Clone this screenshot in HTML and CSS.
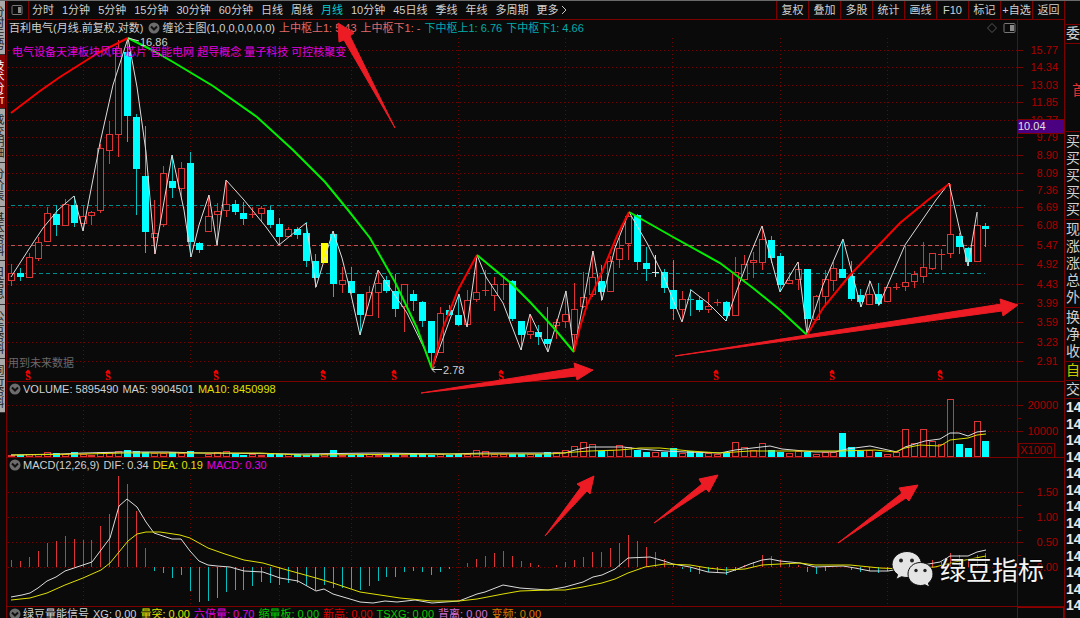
FILE: index.html
```html
<!DOCTYPE html>
<html lang="zh-CN">
<head>
<meta charset="utf-8">
<title>百利电气 月线</title>
<link rel="stylesheet" href="styles.css">
</head>
<body>
<div class="terminal">
  <nav class="side-tabs" aria-label="视图">
    <button class="tab">分时走势</button>
    <button class="tab active">技术分析</button>
    <button class="tab">成交明细</button>
    <button class="tab short">分价表</button>
    <button class="tab">基本资料</button>
    <button class="tab short">日信息</button>
    <button class="tab">公告资料</button>
    <button class="tab">同行资料</button>
  </nav>

  <main class="main">
    <header class="toolbar">
      <button class="layout-btn" aria-label="布局"><svg width="12" height="12" viewBox="0 0 12 12"><rect x="1" y="1.5" width="10" height="9" rx="1" class="ico-line"/><rect x="7" y="3" width="3" height="6" class="ico-fill"/></svg></button>
      <div class="periods">
        <button>分时</button><button>1分钟</button><button>5分钟</button><button>15分钟</button><button>30分钟</button><button>60分钟</button><button>日线</button><button>周线</button><button class="on">月线</button><button>10分钟</button><button>45日线</button><button>季线</button><button>年线</button><button>多周期</button><button class="more">更多<svg width="7" height="10" viewBox="0 0 7 10"><path d="M1 1l4 4-4 4" class="ico-line light"/></svg></button>
      </div>
      <div class="tools">
        <button>复权</button><button>叠加</button><button>多股</button><button>统计</button><button>画线</button><button>F10</button><button>标记</button><button>+自选</button><button>返回</button>
      </div>
    </header>

    <div class="charts">
      <section class="panel">
        <svg id="price" class="plot" viewBox="7 20 1057 362"></svg>
        <div class="legend">
          <span>百利电气(月线.前复权.对数)</span>
          <button class="fold" aria-label="折叠"><svg width="12" height="12" viewBox="0 0 12 12"><circle cx="6" cy="6" r="5.5"/><path d="M3 4.5l3 3 3-3"/></svg></button>
          <span>缠论主图(1,0,0,0,0,0,0)</span>
          <span class="rose">上中枢上1: 5.43</span>
          <span class="rose">上中枢下1: -</span>
          <span class="teal">下中枢上1: 6.76</span>
          <span class="teal">下中枢下1: 4.66</span>
          <span class="panel-icons"><svg width="30" height="12" viewBox="0 0 30 12"><path d="M5 1.5L9.500 6 5 10.500.5 6z" class="ico-line dim"/><rect x="17" y="1.500" width="11" height="9" rx="1" class="ico-line"/><rect x="23" y="3" width="4" height="6" class="ico-fill"/></svg></span>
        </div>
        <p class="concepts">电气设备天津板块风电 芯片 智能电网 超导概念 量子科技 可控核聚变</p>
        <p class="notice">用到未来数据</p>
      </section>

      <section class="panel">
        <svg id="volume" class="plot" viewBox="7 382 1057 76"></svg>
        <div class="legend sub">
          <button class="fold" aria-label="折叠"><svg width="12" height="12" viewBox="0 0 12 12"><circle cx="6" cy="6" r="5.5"/><path d="M3 4.5l3 3 3-3"/></svg></button>
          <span>VOLUME: 5895490</span><span>MA5: 9904501</span><span class="yellow">MA10: 8450998</span>
        </div>
      </section>

      <section class="panel">
        <svg id="macd" class="plot" viewBox="7 458 1057 149"></svg>
        <div class="legend sub">
          <button class="fold" aria-label="折叠"><svg width="12" height="12" viewBox="0 0 12 12"><circle cx="6" cy="6" r="5.5"/><path d="M3 4.5l3 3 3-3"/></svg></button>
          <span>MACD(12,26,9)</span><span>DIF: 0.34</span><span class="yellow">DEA: 0.19</span><span class="magenta">MACD: 0.30</span>
        </div>
      </section>

      <section class="panel signal">
        <div class="legend sub">
          <button class="fold" aria-label="折叠"><svg width="12" height="12" viewBox="0 0 12 12"><circle cx="6" cy="6" r="5.5"/><path d="M3 4.5l3 3 3-3"/></svg></button>
          <span>绿豆量能信号</span><span>XG: 0.00</span><span class="yellow">量突: 0.00</span><span class="magenta">六倍量: 0.70</span><span class="green">缩量板: 0.00</span><span class="red">新高: 0.00</span><span class="green">TSXG: 0.00</span><span class="violet">背离: 0.00</span><span class="orange">变频: 0.00</span>
        </div>
        <div class="signal-axis"></div>
      </section>

      <svg id="notes" class="notes" viewBox="7 20 1057 598"></svg>
    </div>
  </main>

  <aside class="quote">
    <div class="cell gap"></div>
    <div class="cell head">委</div>
    <div class="cell big">首</div>
    <div class="cell rows"><span>买</span><span>买</span><span>买</span><span>买</span><span>买</span></div>
    <div class="cell rows"><span>现</span><span>涨</span><span>涨</span><span>总</span><span>外</span></div>
    <div class="cell rows"><span>换</span><span>净</span><span>收</span></div>
    <div class="cell own">自</div>
    <div class="cell deal">交</div>
    <div class="ticks"><b>14</b><b>14</b><b>14</b><b>14</b><b>14</b><b>14</b><b>14</b><b>14</b><b>14</b><b>14</b><b>14</b><b>14</b><b>14</b></div>
  </aside>
</div>
<script src="chart.js"></script>
</body>
</html>
```

FILE: styles.css
```css
* { box-sizing: border-box; }

body {
  margin: 0;
  height: 100vh;
  overflow: hidden;
  background: #0a0a0a;
  color: #d0d0d0;
  font: 11px/16px "Liberation Sans", "Noto Sans CJK SC", sans-serif;
}

button {
  margin: 0;
  padding: 0;
  border: 0;
  background: none;
  color: inherit;
  font: inherit;
  white-space: nowrap;
}

p { margin: 0; }

.terminal {
  display: grid;
  grid-template-columns: 7px minmax(0, 1fr) 16px;
  height: 100vh;
  border-top: 1px solid #6a6a6a;
}

/* left tabs */
.side-tabs {
  display: flex;
  flex-direction: column;
  overflow: hidden;
  border-right: 1px solid #7c0000;
}
.tab {
  flex: none;
  width: 14px;
  height: 54px;
  margin-left: -9px;
  border-bottom: 1px solid #333;
  background: #a9a9a9;
  color: #202020;
  line-height: 14px;
  writing-mode: vertical-rl;
  text-orientation: upright;
}
.tab.short { height: 44px; }
.tab.active { background: #8a0000; color: #fff; }

/* toolbar */
.main { min-width: 0; overflow: hidden; }
.toolbar {
  display: flex;
  height: 19px;
  border-bottom: 1px solid #7c0000;
  line-height: 18px;
}
.layout-btn {
  display: flex;
  align-items: center;
  width: 22px;
  padding-left: 4px;
  border-right: 1px solid #7c0000;
}
.periods { display: flex; flex: 1; gap: 8px; padding-left: 3px; }
.periods .on { color: #00d0d0; }
.more { display: flex; align-items: center; gap: 2px; }
.tools { display: flex; }
.tools button { width: 32px; border-left: 1px solid #7c0000; }

.ico-line { fill: none; stroke: #777; }
.ico-line.light { stroke: #c4c4c4; }
.ico-line.dim { stroke: #555; }
.ico-fill { fill: #888; }

/* chart panels */
.charts { position: relative; }
.panel { position: relative; }
.plot { display: block; width: 100%; }
.legend {
  position: absolute;
  inset: 0 0 auto 0;
  display: flex;
  align-items: center;
  gap: 4px;
  padding-left: 2px;
  white-space: nowrap;
}
.legend.sub { padding-left: 2px; line-height: 14px; }
.fold { display: flex; margin: 0 -2px 0 0; }
.fold:not(:first-child) { margin-left: 1px; }
.fold circle { fill: #6c6c6c; }
.fold path { fill: none; stroke: #111; stroke-width: 2; }
.panel-icons { display: flex; margin: 0 47px 0 auto; }
.concepts {
  position: absolute;
  top: 24px;
  left: 5px;
  color: #e000e0;
}
.notice {
  position: absolute;
  bottom: 11px;
  left: 1px;
  color: #686868;
}
.rose { color: #e06a6a; }
.teal { color: #00acac; }
.yellow { color: #e0e000; }
.magenta { color: #e000e0; }
.green { color: #00cc00; }
.red { color: #dc0000; }
.violet { color: #d46ed4; }
.orange { color: #dc7800; }

.signal { height: 20px; display: flex; justify-content: flex-end; }
.signal-axis { width: 47px; border: 1px solid #8c0000; }

.notes {
  position: absolute;
  top: 0;
  left: 0;
  width: 100%;
  pointer-events: none;
}

/* chart marks */
.rule { stroke: #7c0000; }
.grid { stroke: #740000; stroke-dasharray: 1 3; }
.level { stroke-dasharray: 4 3; }
.level.rose-line { stroke: #b85858; }
.level.teal-line { stroke: #008c8c; }
.axis-text { fill: #ac0000; font-size: 11px; text-anchor: end; }
.up { fill: #0a0a0a; stroke: #dc3434; }
.up-line { stroke: #dc3434; }
.down { fill: #00ffff; }
.down-line { stroke: #00c0c0; }
.flat-line { stroke: #dddddd; }
.mark { fill: #ffff00; }
.zig { fill: none; stroke: #dcdcdc; stroke-linejoin: round; }
.avg { fill: none; stroke: #e0e000; }
.rise { fill: none; stroke: #f80000; stroke-width: 2; }
.fall { fill: none; stroke: #00f000; stroke-width: 2; }
.arrow { fill: #ed1c24; stroke: #ed1c24; stroke-linejoin: round; }
.sell { fill: #ff0000; font: bold 10px "Liberation Serif", serif; text-anchor: middle; }
.sell-cap { fill: none; stroke: #ff0000; stroke-width: 2; }
.note-text { fill: #d0d0d0; font-size: 11px; }
.tag-box { fill: #4b0082; stroke: #7c0000; }
.tag-text { fill: #e0e0e0; font-size: 11px; }
.unit-box { fill: none; stroke: #7c0000; }
.bubble { fill: #e4e4e4; stroke: #0a0a0a; }
.bubble-eye { fill: #222; }
.brand {
  fill: #f4f4f4;
  font: 26px "Noto Sans CJK SC", sans-serif;
  paint-order: stroke;
  stroke: #00000080;
  stroke-width: 2;
}

/* right quote strip */
.quote {
  display: flex;
  flex-direction: column;
  overflow: hidden;
  border-left: 1px solid #7c0000;
  padding-left: 1px;
  font-size: 14px;
  line-height: 17px;
}
.cell { flex: none; border-bottom: 1px solid #7c0000; overflow: hidden; white-space: nowrap; }
.gap { height: 24px; }
.head { height: 19px; }
.big { height: 88px; padding: 38px 0 0 6px; color: #e83030; }
.rows { display: flex; flex-direction: column; padding: 1px 0; }
.own { height: 19px; color: #c8c800; }
.deal { height: 18px; }
.ticks {
  display: flex;
  flex: 1;
  flex-direction: column;
  justify-content: space-between;
  padding-bottom: 5px;
  line-height: 16px;
  color: #e8e8e8;
}
```

FILE: chart.js
```js
const NS = "http://www.w3.org/2000/svg";
const step = 8.94, start = 11.5;
const xAt = i => Math.round(start + i * step - 0.5) + 0.5;

function add(svg, tag, attrs, text) {
  const el = document.createElementNS(NS, tag);
  for (const k in attrs) el.setAttribute(k, attrs[k]);
  if (text) el.textContent = text;
  svg.appendChild(el);
  return el;
}
const line = (svg, x1, y1, x2, y2, cls) => add(svg, "line", { x1, y1, x2, y2, class: cls });
const poly = (svg, points, cls) => add(svg, "polyline", { points, class: cls });

// Each row: kind, high, body top, body bottom, low
const candles = `r 264 273 281 286,c 268 273 277 281,r 253 257 278 278,r 237 242 259 261,r 207 213 242 242,c 205 214 225 236,r 199 204 226 226,c 196 205 223 227,r 206 216 224 231,r 211 212 216 225,r 144 148 211 213,r 121 134 151 164,r 40 48 135 157,c 40 52 116 142,c 114 117 169 215,c 126 176 232 253,r 200 233 238 254,r 166 173 225 227,c 155 181 188 198,r 162 168 189 200,c 152 163 242 257,c 242 243 250 253,r 195 216 232 232,r 203 211 215 245,r 180 204 211 217,c 200 204 212 215,c 202 213 219 225,x 207 214 215 218,r 206 208 214 221,c 206 210 225 228,c 218 224 237 245,r 227 229 237 237,c 227 229 235 239,c 222 233 261 267,c 254 261 278 288,y 243 243 263 263,c 231 234 284 297,r 267 280 285 293,c 267 281 293 294,c 294 294 315 335,r 286 292 316 316,r 270 283 293 318,c 276 280 291 293,c 274 291 309 317,r 284 284 307 332,c 290 294 301 311,c 301 302 321 327,c 321 321 353 369,r 307 313 353 353,c 305 310 315 316,c 294 315 325 326,r 290 300 325 327,r 256 292 300 302,x 270 290 291 296,r 277 284 296 311,x 277 284 285 300,c 280 281 319 321,c 321 321 335 350,r 315 331 335 339,c 325 332 337 345,c 307 339 344 352,r 319 322 326 339,r 291 314 322 328,r 283 309 335 352,r 272 297 307 308,r 251 277 295 297,c 265 281 292 301,r 256 261 292 292,r 238 248 260 268,r 212 216 244 260,c 214 215 262 270,c 247 263 269 281,w 255 272 273 277,c 269 272 288 293,c 260 290 309 320,r 291 299 310 321,d 289 299 300 316,c 297 300 310 312,r 292 306 310 313,x 299 302 303 306,c 301 302 316 321,r 257 272 316 316,r 255 264 280 282,r 252 260 263 278,r 226 239 263 270,c 236 240 258 263,c 253 256 285 292,r 272 280 284 284,r 262 269 280 290,c 269 269 319 334,r 295 296 320 321,r 270 279 297 306,r 262 268 281 291,c 240 269 278 278,c 261 276 299 301,c 289 295 302 307,r 280 294 305 305,c 283 294 304 306,r 287 287 302 302,x 283 287 288 290,r 246 282 287 291,r 271 274 282 288,r 242 267 277 283,r 253 253 269 270,x 249 254 255 270,r 184 234 254 258,c 233 236 247 254,c 247 248 262 266,r 212 225 262 262,c 223 226 229 247`
  .split(",").map(s => { const p = s.split(" "); return [p[0], ...p.slice(1).map(Number)]; });

const volumes = [2,2,3,3,5,4,3,5,3,2,5,5,6,7,6,5,4,4,5,4,6,0,3,5,6,3,2,3,2,3,3,3,3,2,3,3,7,2,2,3,3,2,3,3,2,3,3,2,3,2,3,3,7,6,3,3,3,3,3,3,5,5,7,11,15,13,6,7,12,10,7,5,5,5,9,4,6,4,4,3,5,15,10,7,14,7,5,4,6,5,3,5,5,24,10,6,7,5,3,5,28,14,28,16,13,58,13,9,36,16];

const bars = [560,561,557,551,543,541,536,539,540,540,526,514,476,484,511,548,571,573,578,575,591,602,601,598,592,590,590,586,582,583,585,583,583,586,590,585,588,588,589,590,586,581,577,577,572,571,572,575,572,569,0,563,559,556,553,551,556,561,563,565,0,565,562,560,557,552,552,548,543,535,541,547,552,559,565,569,572,574,572,573,575,571,565,562,555,556,560,563,565,572,574,571,0,0,570,572,571,573,571,0,565,565,563,560,562,553,555,559,555,553];

const columns = [83.5, 190.5, 279.5, 351.5, 458.5, 565.5, 672.5, 780.5, 887.5];

function frame(svg, top, bottom, rows) {
  columns.forEach(x => line(svg, x, top, x, bottom, "grid"));
  rows.forEach(([y, label]) => {
    line(svg, 8, y + 0.5, 1017, y + 0.5, "grid");
    line(svg, 1018, y + 0.5, 1023, y + 0.5, "rule");
    add(svg, "text", { x: 1058, y: y + 4, class: "axis-text" }, label);
  });
}

// Price panel
const price = document.getElementById("price");
frame(price, 38, 370, [[50, "15.77"], [67, "14.34"], [85, "13.03"], [102, "11.85"], [120, "10.77"], [137, "9.79"], [155, "8.90"], [173, "8.09"], [190, "7.36"], [207, "6.69"], [225, "6.08"], [245, "5.47"], [264, "4.92"], [284, "4.43"], [303, "3.99"], [322, "3.59"], [342, "3.23"], [361, "2.91"]]);
line(price, 1017.5, 20, 1017.5, 382, "rule");
line(price, 7, 381.5, 1064, 381.5, "rule");
line(price, 11, 205.5, 985, 205.5, "level teal-line");
line(price, 11, 245.5, 985, 245.5, "level rose-line");
line(price, 11, 273.5, 985, 273.5, "level teal-line");
add(price, "rect", { x: 1017.5, y: 119.5, width: 46, height: 14, class: "tag-box" });
add(price, "text", { x: 1018, y: 130, class: "tag-text" }, "10.04");

candles.forEach(([kind, high, top, bottom, low], i) => {
  const x = xAt(i);
  if (kind === "r") {
    line(price, x, high, x, low, "up-line");
    add(price, "rect", { x: x - 3, y: top + 0.5, width: 6, height: Math.max(bottom - top - 1, 1), class: "up" });
  } else if (kind === "c") {
    line(price, x, high, x, low, "down-line");
    add(price, "rect", { x: x - 3.5, y: top, width: 7, height: bottom - top, class: "down" });
  } else if (kind === "y") {
    add(price, "rect", { x: x - 3.5, y: top, width: 7, height: bottom - top, class: "mark" });
  } else {
    const cls = { x: "up-line", w: "flat-line", d: "down-line" }[kind];
    line(price, x, high, x, low, cls);
    line(price, x - 3.5, top + 0.5, x + 3.5, top + 0.5, cls);
  }
});

poly(price, "11,277 29,249 43,228 58,210 74,196 83,231 87,210 100,143 113,85 128,38 137,87 146,152 151,210 155,254 172,155 184,210 191,257 199,225 209,195 217,245 226,180 244,200 266,227 279,245 306,223 316,287 333,231 342,258 350,290 360,335 378,270 390,288 407,313 425,350 432,369 459,294 467,327 477,255 486,277 503,303 521,350 530,314 548,352 566,291 574,352 593,251 602,300 615,248 629,212 647,243 663,275 682,322 691,290 708,303 726,321 737,290 750,255 762,226 780,292 798,262 807,334 823,285 843,239 861,307 870,281 879,305 905,245 936,200 949,183 968,266 977,212", "zig");
poly(price, "11,113 40,91 60,77 98,53 128,38", "rise");
poly(price, "432,369 443,328 458,290 477,255", "rise");
poly(price, "574,352 580,327 587,305 602,272 617,236 629,212", "rise");
poly(price, "807,335 823,308 850,275 877,247 900,223 928,200 949,184", "rise");
poly(price, "128,38 150,49 173,62 213,86 257,117 293,150 325,182 348,210 370,238 395,282 417,328 432,369", "fall");
poly(price, "477,255 512,284 530,302 553,327 574,352", "fall");
poly(price, "629,212 673,237 720,263 753,288 780,310 807,335", "fall");
add(price, "path", { d: "M128 38l11 3M432 369.500h10M432 369.500l3-3M432 369.500l3 3", class: "zig" });
add(price, "text", { x: 140, y: 46, class: "note-text" }, "16.86");
add(price, "text", { x: 443, y: 374, class: "note-text" }, "2.78");
[28, 108, 216, 323, 394, 501, 716, 832, 940].forEach(x => {
  add(price, "text", { x, y: 380, class: "sell" }, "S");
  add(price, "path", { d: `M${x - 2} 373l2-2 2 2`, class: "sell-cap" });
});

// Volume panel
const volume = document.getElementById("volume");
frame(volume, 398, 457, [[405, "20000"], [431, "10000"]]);
line(volume, 1017.5, 382, 1017.5, 458, "rule");
line(volume, 1018, 418.5, 1021, 418.5, "rule");
add(volume, "rect", { x: 1018.5, y: 443.5, width: 36, height: 14, class: "unit-box" });
add(volume, "text", { x: 1052, y: 454, class: "axis-text" }, "X1000");
volumes.forEach((h, i) => {
  if (!h) return;
  const x = xAt(i), down = "cd".includes(candles[i][0]);
  if (down) add(volume, "rect", { x: x - 3.5, y: 457 - h, width: 7, height: h, class: "down" });
  else add(volume, "rect", { x: x - 3, y: 457.5 - h, width: 6, height: h - 1, class: "up" });
});
line(volume, 7, 457.5, 1064, 457.5, "rule");
poly(volume, "11,455 60,454 83,453 125,452 167,452 200,453 300,454 375,453 450,454 485,453 520,453 565,453 575,450 590,447 623,447 640,449 665,451 685,452 720,453 735,450 770,446 782,449 815,452 835,452 847,449 870,446 888,450 897,452 905,447 915,444 925,441 940,439 950,433 959,433 968,436 977,432 986,431", "zig");
poly(volume, "11,455 83,454 125,453 260,453 300,455 450,454 550,454 575,452 590,451 620,450 640,448 660,448 690,451 720,453 750,451 840,451 875,450 895,452 905,448 920,445 940,446 950,440 968,438 977,435 986,434", "avg");

// MACD panel
const macd = document.getElementById("macd");
frame(macd, 475, 605, [[492, "1.50"], [517, "1.00"], [542, "0.50"], [567, "0.00"]]);
line(macd, 1017.5, 458, 1017.5, 607, "rule");
line(macd, 7, 606.5, 1064, 606.5, "rule");
[505.5, 530.5, 555.5].forEach(y => line(macd, 1018, y, 1021, y, "rule"));
bars.forEach((y, i) => {
  if (y) line(macd, xAt(i), 567, xAt(i), y, y < 567 ? "up-line" : "down-line");
});
poly(macd, "11,597 22,595 30,593 38,588 47,581 56,577 65,571 83,565 92,562 110,538 119,506 127,499 137,507 146,522 154,533 163,536 172,539 181,539 190,551 199,561 208,565 217,566 230,567 244,571 263,572 280,578 298,581 316,591 324,589 333,594 350,599 360,602 373,603 385,601 397,602 415,600 432,603 459,601 477,594 485,592 503,585 520,588 548,590 565,587 583,582 593,577 602,575 615,569 628,558 650,557 664,561 673,564 690,567 708,572 726,573 735,570 750,564 762,560 770,559 780,561 800,563 815,567 843,566 855,568 870,571 888,571 905,568 940,562 950,556 968,556 977,552 986,550", "zig");
poly(macd, "11,600 30,598 47,593 65,585 83,578 101,570 110,563 119,552 128,541 137,534 146,532 160,532 180,535 190,538 208,548 225,554 244,560 263,563 280,568 298,573 316,578 333,583 360,592 380,595 400,598 432,601 459,601 477,599 503,594 520,591 548,590 565,590 583,587 602,583 615,579 628,573 645,567 665,564 690,565 708,568 726,570 745,569 762,565 780,564 800,563 815,565 850,565 880,568 905,569 935,567 955,562 986,556", "avg");

// Annotations across panels
const notes = document.getElementById("notes");
[
  "395,128 344,40 339,42 338,23 354,33 350,36",
  "421,393 575,368 574,363 593,370 577,380 576,376",
  "675,356 1001,304 1000,299 1018,305 1003,316 1002,311",
  "545,536 581,487 577,484 594,476 590,494 587,491",
  "654,523 702,484 699,479 718,475 709,492 706,489",
  "838,543 902,493 899,488 918,485 909,501 906,498"
].forEach(points => add(notes, "polygon", { points, class: "arrow" }));

add(notes, "path", { class: "bubble", d: "M907 551.5c-8.200 0-15 5.800-15 13 0 4.100 2.200 7.700 5.600 10l-1.600 5 5.500-2.800c1.700.5 3.600.8 5.500.8 8.200 0 14.500-5.800 14.500-13s-6.300-13-14.500-13z" });
add(notes, "path", { class: "bubble", d: "M920.500 562.500c-7.200 0-12.500 5-12.500 11.500s5.300 11.500 12.500 11.500c1.600 0 3.100-.2 4.500-.7l4.700 2.400-1.300-4.200c3-2.100 4.600-5.300 4.600-9 0-6.500-5.300-11.500-12.500-11.500z" });
[[901, 560.5, 2], [912, 560.5, 2], [916, 570.5, 1.700], [925, 570.5, 1.700]].forEach(([cx, cy, r]) => add(notes, "circle", { cx, cy, r, class: "bubble-eye" }));
add(notes, "text", { x: 940, y: 580, class: "brand" }, "绿豆指标");
```
